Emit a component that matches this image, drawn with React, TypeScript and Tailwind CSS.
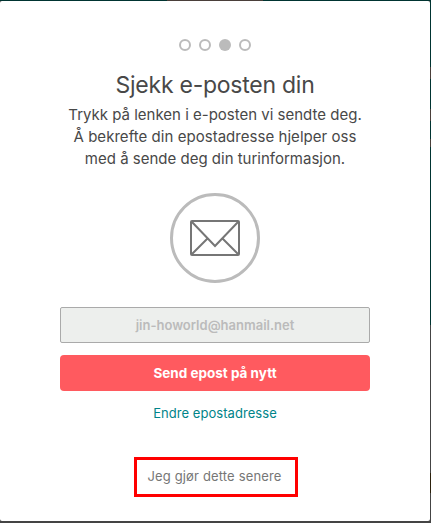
const steps = [1, 2, 3, 4];
const currentStep = 3;

export default function App() {
  return (
    <div className="flex h-[523px] w-[431px] overflow-hidden bg-[#444444] font-['Inter','Liberation_Sans',sans-serif]">
      <div className="flex w-[430px] shrink-0 flex-col">
        {/* Page behind the modal */}
        <div className="flex h-px shrink-0 bg-[#003431]">
          <div className="ml-[167px] w-24 bg-[#4a3f3a]" />
        </div>

        <div className="flex h-[520px] shrink-0 flex-col items-center rounded-[2px] bg-white text-center">
          {/* Steps */}
          <div className="mt-[38px] flex gap-2">
            {steps.map((step) => (
              <span
                key={step}
                className={
                  step === currentStep
                    ? "size-3 rounded-full bg-[#bbbbbb]"
                    : "size-3 rounded-full border-2 border-[#bbbbbb]"
                }
              />
            ))}
          </div>

          {/* Heading */}
          <h1 className="mt-[18px] h-8 text-[23px] leading-8 tracking-[-0.25px] whitespace-nowrap text-[#484848]">
            Sjekk e-posten din
          </h1>
          <p className="mt-[3px] text-[15px] leading-[22px] whitespace-nowrap text-[#484848]">
            <span className="block">Trykk på lenken i e-posten vi sendte deg.</span>
            <span className="block tracking-[0.04px]">Å bekrefte din epostadresse hjelper oss</span>
            <span className="block">med å sende deg din turinformasjon.</span>
          </p>

          <div className="mt-[23px] flex size-[90px] shrink-0 items-center justify-center rounded-full border-3 border-[#bbbbbb]">
            <svg
              width="50"
              height="36"
              viewBox="0 0 50 36"
              fill="none"
              stroke="#767676"
              strokeWidth="2"
              className="mr-px"
            >
              <rect x="1" y="1" width="48" height="34" rx="1" />
              <path d="M1.5 1.5 25 26 48.5 1.5M1.5 34.5 17 19M48.5 34.5 33 19" />
            </svg>
          </div>

          {/* Form */}
          <div className="mt-6 flex w-[310px] flex-col">
            <input
              disabled
              value="jin-howorld@hanmail.net"
              className="h-9 rounded-[2px] border border-[#aaaaaa] bg-[#edefed] text-center text-[13px] font-semibold text-[#bbbbbb]"
            />
            <button className="mt-3 h-9 rounded bg-[#ff5a5f] text-[13.5px] font-bold text-white">
              Send epost på nytt
            </button>
          </div>
          <button className="mt-3 h-5 text-[13px] leading-5 tracking-[0.05px] text-[#008489]">
            Endre epostadresse
          </button>

          <button className="mt-[34px] ml-0.5 h-10 w-[164px] border-3 border-[#ff0000] pr-[3px] text-[13px] tracking-[0.15px] whitespace-nowrap text-[#767676]">
            Jeg gjør dette senere
          </button>
        </div>
      </div>

      <div className="flex w-px shrink-0 flex-col">
        <div className="h-[67px] bg-[#003431]" />
        <div className="h-3 bg-[#4a3f3a]" />
        <div className="h-[30px] bg-[#003431]" />
        <div className="h-3 bg-[#4a3f3a]" />
        <div className="h-[18px] bg-[#003431]" />
        <div className="h-2 bg-[#4a3f3a]" />
        <div className="h-[178px] bg-[#003431]" />
        <div className="h-[148px] bg-[#444444]" />
        <div className="h-5 bg-[#2c210c]" />
      </div>
    </div>
  );
}
